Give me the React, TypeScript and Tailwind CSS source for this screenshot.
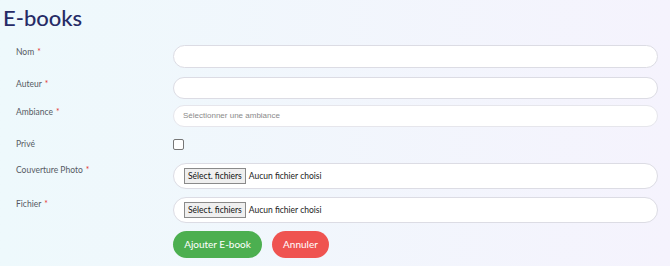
import React from "react";

const Label: React.FC<{ text: string; required?: boolean }> = ({ text, required }) => (
  <label className="w-[173px] shrink-0 pl-4 pt-[1px] text-[8.5px] text-[#555a63]">
    {text}
    {required && <span className="ml-[3px] text-[#e53935]">*</span>}
  </label>
);

const FileField: React.FC = () => (
  <div className="flex h-[26px] flex-1 items-center rounded-full border border-[#dcdce4] bg-white pl-[10px]">
    <span className="flex h-[16px] items-center border border-[#8a8a8a] bg-[#efefef] px-[3px] text-[8.5px] text-[#111]">
      Sélect. fichiers
    </span>
    <span className="ml-[3px] text-[8.5px] text-[#222]">Aucun fichier choisi</span>
  </div>
);

export default function App() {
  return (
    <div className="h-[266px] w-[670px] overflow-hidden bg-gradient-to-r from-[#eef9fc] to-[#f5f3fd] font-['Lato',sans-serif]">
      <h1 className="pl-[3px] pt-[3px] text-[22px] font-medium leading-[30px] text-[#262b66]">E-books</h1>

      <form className="flex w-[658px] flex-col" onSubmit={(e) => e.preventDefault()}>
        <div className="mt-[12px] flex">
          <Label text="Nom" required />
          <input className="h-[23px] flex-1 rounded-full border border-[#dcdce4] bg-white px-3 outline-none" />
        </div>
        <div className="mt-[9px] flex">
          <Label text="Auteur" required />
          <input className="h-[22px] flex-1 rounded-full border border-[#dcdce4] bg-white px-3 outline-none" />
        </div>
        <div className="mt-[6px] flex">
          <Label text="Ambiance" required />
          <div className="flex h-[22px] flex-1 items-center rounded-full border border-[#e6e6ec] bg-white pl-[9px] font-['Liberation_Sans'] text-[8px] text-[#8a8a8a]">
            Sélectionner une ambiance
          </div>
        </div>
        <div className="mt-[11px] flex h-[12px] items-center">
          <label className="w-[173px] shrink-0 pl-4 text-[8.5px] leading-none text-[#555a63]">Privé</label>
          <input type="checkbox" className="m-0 h-[11px] w-[11px] appearance-none rounded-[2px] border border-[#767676] bg-white" />
        </div>
        <div className="mt-[13px] flex">
          <Label text="Couverture Photo" required />
          <FileField />
        </div>
        <div className="mt-[8px] flex">
          <Label text="Fichier" required />
          <FileField />
        </div>
        <div className="mt-[8px] flex gap-[10px] pl-[173px]">
          <button type="submit" className="h-[27px] w-[89px] rounded-full bg-[#4caf50] text-[10px] text-white">
            Ajouter E-book
          </button>
          <button type="button" className="h-[27px] w-[57px] rounded-full bg-[#ef5350] text-[10px] text-white">
            Annuler
          </button>
        </div>
      </form>
    </div>
  );
}
